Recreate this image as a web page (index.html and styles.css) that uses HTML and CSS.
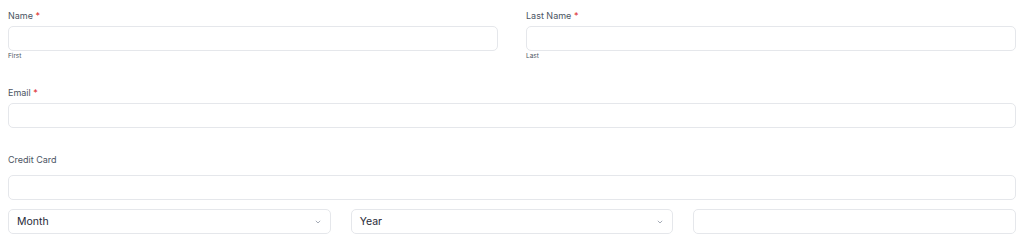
FILE: index.html
```html
<!DOCTYPE html>
<html>
<head>
<meta charset="utf-8">
<link rel="stylesheet" href="styles.css">
</head>
<body>
<form class="form">
  <div class="row two">
    <div class="field">
      <label class="label">Name <span class="req">*</span></label>
      <div class="input"></div>
      <div class="sub">First</div>
    </div>
    <div class="field">
      <label class="label">Last Name <span class="req">*</span></label>
      <div class="input"></div>
      <div class="sub">Last</div>
    </div>
  </div>
  <div class="field email">
    <label class="label">Email <span class="req">*</span></label>
    <div class="input"></div>
  </div>
  <div class="field card">
    <label class="label card-label">Credit Card</label>
    <div class="input"></div>
    <div class="row three">
      <div class="input select">Month
        <svg class="chev" width="6" height="4" viewBox="0 0 6 4"><path d="M0.8 0.8 L3 3 L5.2 0.8" fill="none" stroke="#9ca3af" stroke-width="0.9"/></svg>
      </div>
      <div class="input select">Year
        <svg class="chev" width="6" height="4" viewBox="0 0 6 4"><path d="M0.8 0.8 L3 3 L5.2 0.8" fill="none" stroke="#9ca3af" stroke-width="0.9"/></svg>
      </div>
      <div class="input"></div>
    </div>
  </div>
</form>
</body>
</html>
```
FILE: styles.css
```css
* { box-sizing: border-box; }
html, body { margin: 0; background: #fff; }
body { padding: 10px 8px 0 8px; font-family: Inter, "Noto Sans", sans-serif; }
.form { display: flex; flex-direction: column; width: 1008px; }
.row.two { display: grid; grid-template-columns: 1fr 1fr; column-gap: 28px; }
.row.three { display: grid; grid-template-columns: 1fr 1fr 1fr; column-gap: 20px; margin-top: 9px; }
.field { display: flex; flex-direction: column; }
.label { font-size: 9px; line-height: 12px; color: #4b5563; margin-bottom: 4px; }
.req { color: #dc2626; }
.input { height: 25px; border: 1px solid #e5e7eb; border-radius: 5px; background: #fff; }
.sub { font-size: 6.5px; line-height: 9px; color: #4b5563; margin-top: 1px; }
.email { margin-top: 26px; }
.card { margin-top: 26px; }
.card-label { margin-bottom: 9px; }
.select { display: flex; align-items: center; justify-content: space-between; padding: 0 9px 0 8px; font-size: 10.5px; color: #1f2937; }
.chev { display: block; }
```
